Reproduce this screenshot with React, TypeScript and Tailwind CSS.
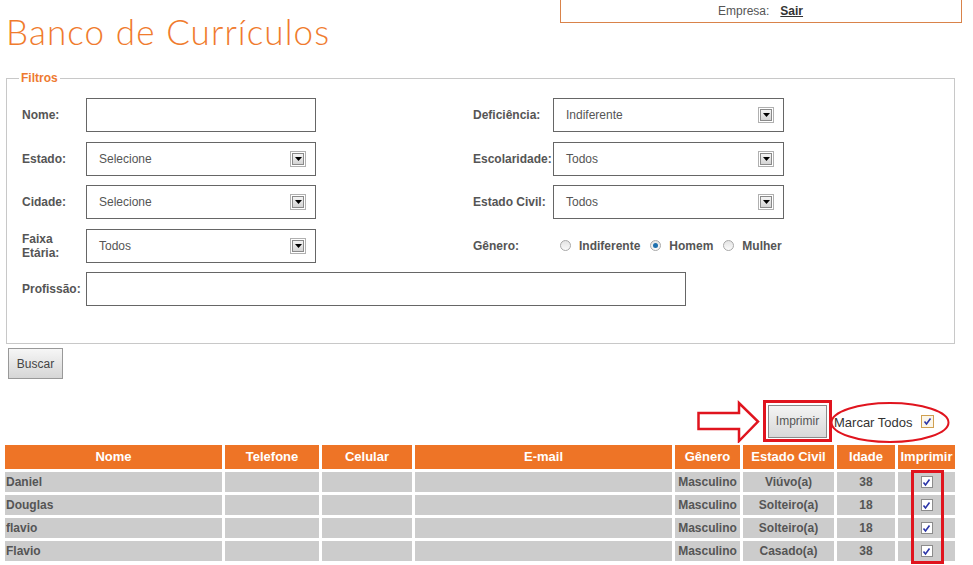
import React from "react";

const Arrow = () => (
  <span className="ml-auto mr-[9px] w-[16px] h-[16px] border border-[#b0b0b0] bg-white flex items-center justify-center">
    <span className="w-[12px] h-[12px] border border-[#8a8a8a] bg-gradient-to-b from-[#f4f4f4] to-[#d4d4d4] flex items-center justify-center">
      <svg width="7" height="4" viewBox="0 0 7 4">
        <path d="M0 0 L7 0 L3.5 4 Z" fill="#000" />
      </svg>
    </span>
  </span>
);

const Select = ({ value, w }: { value: string; w: string }) => (
  <div className={`${w} h-[34px] border border-[#666] flex items-center pl-[12px] text-[12px] text-[#555]`}>
    <span>{value}</span>
    <Arrow />
  </div>
);

const Input = ({ w }: { w: string }) => <div className={`${w} h-[34px] border border-[#666] bg-white`} />;

const Label = ({ children, w }: { children: React.ReactNode; w: string }) => (
  <div className={`${w} text-[12px] font-bold text-[#555] leading-[14px]`}>{children}</div>
);

const Radio = ({ checked, label, ml }: { checked?: boolean; label: string; ml: string }) => (
  <div className={`flex items-center ${ml}`}>
    <span className="w-[11px] h-[11px] rounded-full border border-[#a8a8a8] bg-gradient-to-b from-[#e4e4e4] to-[#fafafa] flex items-center justify-center">
      {checked && <span className="w-[5px] h-[5px] rounded-full bg-[#1d6fae]" />}
    </span>
    <span className="ml-[8px] text-[12px] font-bold text-[#555]">{label}</span>
  </div>
);

const Check = () => (
  <span className="w-[12px] h-[12px] border border-[#8c8c8c] bg-white flex items-center justify-center">
    <svg width="9" height="9" viewBox="0 0 9 9">
      <path d="M1.5 4.5 L3.5 7 L7.5 1.5" stroke="#2b35a8" strokeWidth="1.6" fill="none" />
    </svg>
  </span>
);

const rows = [
  ["Daniel", "Masculino", "Viúvo(a)", "38"],
  ["Douglas", "Masculino", "Solteiro(a)", "18"],
  ["flavio", "Masculino", "Solteiro(a)", "18"],
  ["Flavio", "Masculino", "Casado(a)", "38"],
];

export default function App() {
  return (
    <div className="w-[973px] h-[565px] relative overflow-hidden bg-white font-['Liberation_Sans',Arial,sans-serif]">
      <div className="flex items-start">
        <h1 className="pl-[6px] pt-[11px] text-[35px] leading-[40px] tracking-[1.1px] font-light text-[#f07b2d] font-['Lato',sans-serif]">
          Banco de Currículos
        </h1>
        <div className="ml-auto mr-[11px] w-[402px] h-[23px] border-x border-b border-[#d9834a] flex items-center text-[12px] text-[#555]">
          <span className="ml-[157px]">Empresa:</span>
          <span className="ml-[11px] font-bold text-[#333] underline">Sair</span>
        </div>
      </div>

      <fieldset className="mt-[20px] ml-[6px] w-[949px] border border-[#c8c8c8]">
        <legend className="ml-[12px] px-[2px] text-[12px] leading-[14px] font-bold text-[#ee7a30]">Filtros</legend>
        <div className="pl-[15px] pt-[13px] pb-[37px] flex flex-col gap-[9.5px]">
          <div className="flex items-center">
            <div className="w-[451px] flex items-center">
              <Label w="w-[64px]">Nome:</Label>
              <Input w="w-[230px]" />
            </div>
            <Label w="w-[80px]">Deficiência:</Label>
            <Select value="Indiferente" w="w-[231px]" />
          </div>
          <div className="flex items-center">
            <div className="w-[451px] flex items-center">
              <Label w="w-[64px]">Estado:</Label>
              <Select value="Selecione" w="w-[230px]" />
            </div>
            <Label w="w-[80px] whitespace-nowrap">Escolaridade:</Label>
            <Select value="Todos" w="w-[231px]" />
          </div>
          <div className="flex items-center">
            <div className="w-[451px] flex items-center">
              <Label w="w-[64px]">Cidade:</Label>
              <Select value="Selecione" w="w-[230px]" />
            </div>
            <Label w="w-[80px] whitespace-nowrap">Estado Civil:</Label>
            <Select value="Todos" w="w-[231px]" />
          </div>
          <div className="flex items-center">
            <div className="w-[451px] flex items-center">
              <Label w="w-[64px]">
                Faixa
                <br />
                Etária:
              </Label>
              <Select value="Todos" w="w-[230px]" />
            </div>
            <Label w="w-[80px]">Gênero:</Label>
            <Radio label="Indiferente" ml="ml-[7px]" />
            <Radio label="Homem" ml="ml-[10px]" checked />
            <Radio label="Mulher" ml="ml-[10px]" />
          </div>
          <div className="flex items-center">
            <Label w="w-[64px]">Profissão:</Label>
            <Input w="w-[600px]" />
          </div>
        </div>
      </fieldset>

      <button className="mt-[4px] ml-[8px] w-[55px] h-[31px] border border-[#999] bg-gradient-to-b from-[#f6f6f6] to-[#d6d6d6] text-[12px] text-[#444]">
        Buscar
      </button>

      <div className="mt-[20px] h-[44px] flex items-start justify-end pr-[23px]">
        <svg width="66" height="44" viewBox="0 0 66 44">
          <path d="M1.5 14 L42 14 L42 4 L61 22.5 L42 42 L42 30 L1.5 30 Z" fill="#fff" stroke="#e0141e" strokeWidth="2.5" strokeLinejoin="miter" />
        </svg>
        <div className="mt-[1px] w-[69px] h-[42px] border-[3px] border-[#e0141e] flex items-center justify-center">
          <div className="w-[59px] h-[33px] border border-[#8a8a8a] bg-gradient-to-b from-[#f4f4f4] to-[#d8d8d8] flex items-center justify-center text-[12px] text-[#555]">
            Imprimir
          </div>
        </div>
        <div className="relative w-[118px] h-[44px] flex items-center pl-[2px]">
          <span className="text-[13px] text-[#333] mt-[4px]">Marcar Todos</span>
          <span className="ml-[8px] w-[13px] h-[13px] border border-[#d0a050] bg-[#fbf6ea] flex items-center justify-center">
            <svg width="9" height="9" viewBox="0 0 9 9">
              <path d="M1.5 4.5 L3.5 7 L7.5 1.5" stroke="#2b35a8" strokeWidth="1.6" fill="none" />
            </svg>
          </span>
          <svg className="absolute left-[-2px] top-[2px]" width="120" height="42" viewBox="0 0 120 42">
            <ellipse cx="60" cy="21.5" rx="58.5" ry="19.5" fill="none" stroke="#e0141e" strokeWidth="2" />
          </svg>
        </div>
      </div>

      <div className="relative mt-[2px] ml-[5px] w-[950px] grid grid-cols-[217px_94px_90px_257px_65px_91px_58px_57px] gap-[3px] text-[12px]">
        {["Nome", "Telefone", "Celular", "E-mail", "Gênero", "Estado Civil", "Idade", "Imprimir"].map((h) => (
          <div key={h} className="h-[24px] bg-[#ee7426] text-white font-bold text-[13px] flex items-center justify-center whitespace-nowrap overflow-visible">
            {h}
          </div>
        ))}
        {rows.map((r, i) => (
          <React.Fragment key={i}>
            <div className="h-[20px] bg-[#cccccc] flex items-center pl-[1px] font-bold text-[#555]">{r[0]}</div>
            <div className="h-[20px] bg-[#cccccc]" />
            <div className="h-[20px] bg-[#cccccc]" />
            <div className="h-[20px] bg-[#cccccc]" />
            <div className="h-[20px] bg-[#cccccc] flex items-center justify-center font-bold text-[#555]">{r[1]}</div>
            <div className="h-[20px] bg-[#cccccc] flex items-center justify-center font-bold text-[#555]">{r[2]}</div>
            <div className="h-[20px] bg-[#cccccc] flex items-center justify-center font-bold text-[#555]">{r[3]}</div>
            <div className="h-[20px] bg-[#cccccc] flex items-center justify-center">
              <Check />
            </div>
          </React.Fragment>
        ))}
        <div className="absolute left-[906px] top-[25px] w-[33px] h-[94px] border-[3px] border-[#e0141e] pointer-events-none" />
      </div>
    </div>
  );
}
